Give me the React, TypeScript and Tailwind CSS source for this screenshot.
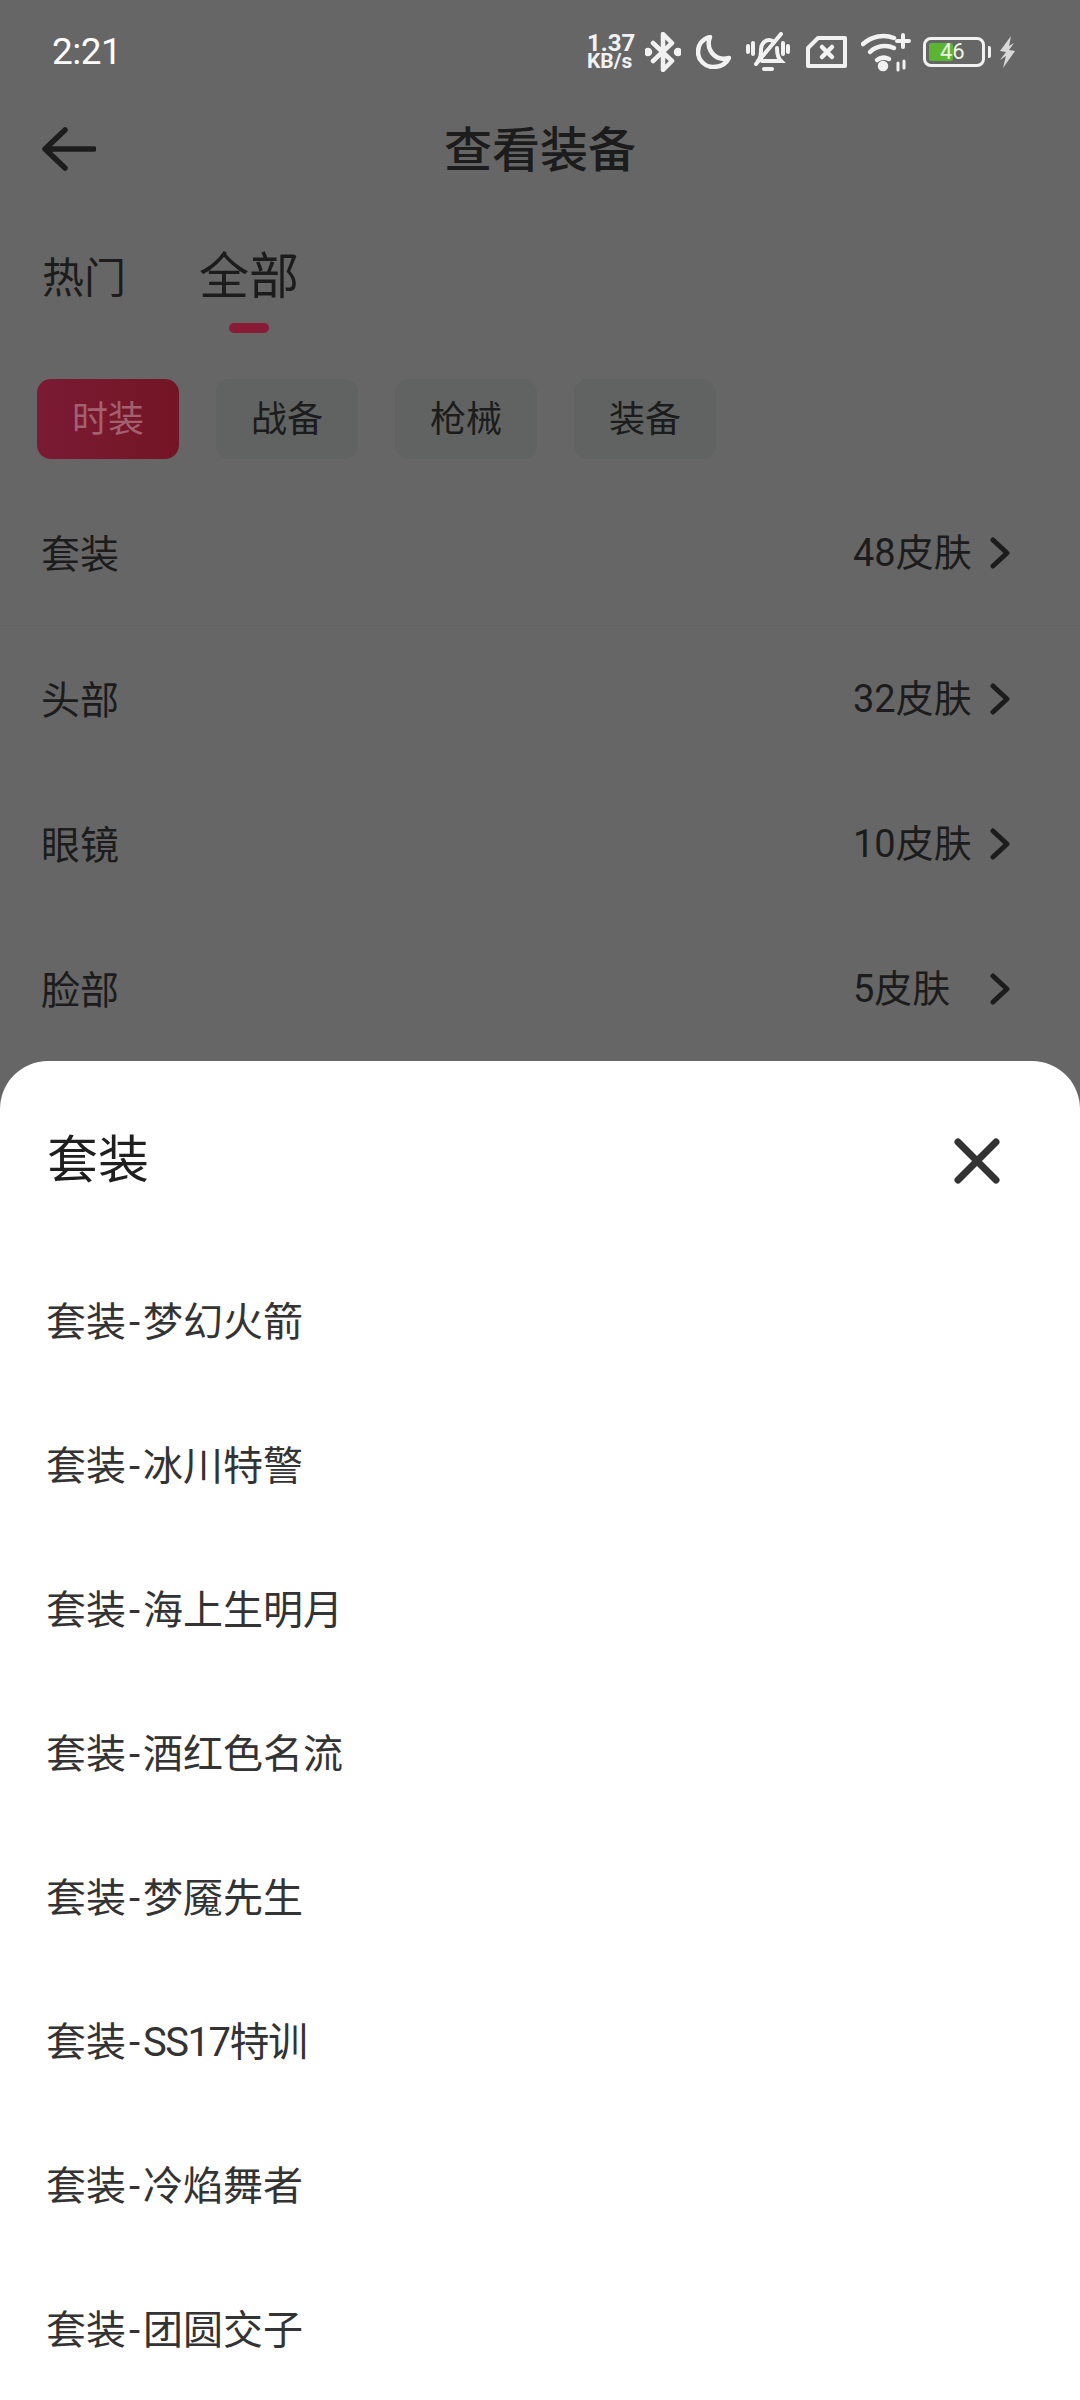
const chips = ["时装", "战备", "枪械", "装备"];

const rows = [
  { name: "套装", count: "48皮肤", line: true },
  { name: "头部", count: "32皮肤" },
  { name: "眼镜", count: "10皮肤" },
  { name: "脸部", count: "5皮肤" },
];

const suits = ["梦幻火箭", "冰川特警", "海上生明月", "酒红色名流", "梦魇先生", "SS17特训", "冷焰舞者", "团圆交子"];

function StatusIcons() {
  return (
    <div className="flex items-center text-[#f2f2f2]">
      <div className="flex w-[48px] flex-col font-['Roboto'] font-bold">
        <span className="text-[24px] leading-[19px]">1.37</span>
        <span className="text-[21px] leading-[17px]">KB/s</span>
      </div>
      {/* bluetooth */}
      <svg className="ml-[10px]" width="36" height="40" viewBox="0 0 36 40" fill="none" stroke="currentColor" strokeWidth="4.5" strokeLinejoin="round" strokeLinecap="round">
        <path d="M8 11 27 29 18 38V2l9 9L8 29" />
        <circle cx="3" cy="20" r="2" fill="currentColor" />
        <circle cx="33" cy="20" r="2" fill="currentColor" />
      </svg>
      {/* moon */}
      <svg className="ml-[15px]" width="35" height="34" viewBox="0 0 35 34" fill="none" stroke="currentColor" strokeWidth="4.5" strokeLinejoin="round">
        <path d="M14 2C6 4 2 10 2 17c0 8 7 15 15 15 7 0 13-3 16-9-3 1-6 1-8 .5C16 22 10 12 14 2Z" />
      </svg>
      {/* muted bell */}
      <svg className="ml-[15px]" width="44" height="40" viewBox="0 0 44 40" fill="none" stroke="currentColor" strokeWidth="4" strokeLinecap="round">
        <path d="M12 29c3-3 3-7 3-12 0-5 4-9 8-9 2 0 4 1 5 2" />
        <path d="M31 16c0 5 1 10 4 13H16" />
        <path d="M35 2 10 32" />
        <path d="M18 37h8" />
        <path d="M2 14v6M7 11v11M37 11v11M42 14v6" />
      </svg>
      {/* sim with cross */}
      <svg className="ml-[16px]" width="41" height="32" viewBox="0 0 41 32" fill="none" stroke="currentColor" strokeWidth="4" strokeLinejoin="round" strokeLinecap="round">
        <path d="M12 2h27v28H2V12Z" />
        <path d="m16 11 10 10M26 11 16 21" strokeWidth="4.5" />
      </svg>
      {/* wifi */}
      <svg className="ml-[14px]" width="50" height="40" viewBox="0 0 50 40" fill="none" stroke="currentColor" strokeWidth="4.5" strokeLinecap="round">
        <path d="M2 12c9-8 21-10 31-6" />
        <path d="M9 20c6-6 16-8 24-4" />
        <path d="M16 28c4-3 8-3 12-1" />
        <circle cx="22" cy="34" r="3" fill="currentColor" />
        <path d="M42 3v12M36 9h12" strokeWidth="4" />
        <path d="M37 31v7M43 29v7" strokeWidth="3" />
      </svg>
      {/* battery */}
      <div className="ml-[12px] flex items-center">
        <div className="relative flex h-[30px] w-[62px] items-center rounded-[8px] border-[3px] border-[#f2f2f2] p-[3px]">
          <div className="h-full w-[24px] rounded-[2px] bg-[#5cb531]" />
          <span className="absolute left-[14px] font-['Roboto'] text-[22px] leading-none text-[#eef5e8]">46</span>
        </div>
        <div className="ml-[3px] h-[12px] w-[3px] rounded-r-[2px] bg-[#f2f2f2]" />
      </div>
      <svg className="ml-[8px]" width="17" height="32" viewBox="0 0 17 32" fill="#d9d9d9">
        <path d="M12 0 1 15l6 1-6 8 6-4-3 12 12-17-6-1 5-7-5 3Z" />
      </svg>
    </div>
  );
}

export default function App() {
  return (
    <div className="flex h-[2400px] w-[1080px] flex-col overflow-hidden bg-[#666666] font-['Noto_Sans_CJK_SC',sans-serif] text-[#1c1c1c]">
      <div className="flex h-[104px] items-center justify-between pr-[64px] pl-[52px]">
        <span className="font-['Roboto'] text-[37px] tracking-[-0.5px] text-white">2:21</span>
        <StatusIcons />
      </div>

      <header className="grid h-[90px] grid-cols-[1fr_auto_1fr] items-center px-[42px]">
        <svg width="54" height="44" viewBox="0 0 54 44" fill="none" stroke="#1c1c1c" strokeWidth="5.5" strokeLinecap="round" strokeLinejoin="round">
          <path d="M23 3 3 22l20 19M4 22h48" />
        </svg>
        <h1 className="mb-[6px] text-[48px] leading-none font-medium">查看装备</h1>
      </header>

      <div className="flex h-[185px] items-start gap-[73px] pt-[50px] pl-[42px]">
        <span className="pt-[6px] text-[42px] leading-[50px]">热门</span>
        <div className="flex flex-col items-center">
          <span className="text-[50px] leading-[56px]">全部</span>
          <div className="mt-[23px] h-[10px] w-[40px] rounded-full bg-[#8a1b37]" />
        </div>
      </div>

      <div className="flex gap-[37px] pl-[37px]">
        {chips.map((chip, i) => (
          <div
            key={chip}
            className={
              i === 0
                ? "flex h-[80px] w-[142px] items-center justify-center rounded-[14px] bg-gradient-to-r from-[#7a1a34] to-[#741524] pb-[6px] text-[36px] text-[#a3606f]"
                : "flex h-[80px] w-[142px] items-center justify-center rounded-[14px] bg-[#606362] pb-[6px] text-[36px]"
            }
          >
            {chip}
          </div>
        ))}
      </div>

      <div className="mt-[22px] flex flex-col">
        {rows.map((row) => (
          <div
            key={row.name}
            className={
              row.line
                ? "flex h-[145px] items-center border-b border-[#636363] pr-[70px] pl-[41px]"
                : "flex h-[145px] items-center pr-[70px] pl-[41px]"
            }
          >
            <span className="flex-1 pb-[3px] text-[39px]">{row.name}</span>
            <span className="w-[137px] pt-[1px] font-['Roboto','Noto_Sans_CJK_SC',sans-serif] text-[38px]">{row.count}</span>
            <svg width="20" height="32" viewBox="0 0 20 32" fill="none" stroke="#1c1c1c" strokeWidth="5" strokeLinecap="round" strokeLinejoin="round">
              <path d="m3 3 14 13L3 29" />
            </svg>
          </div>
        ))}
      </div>

      <div className="flex-1 rounded-t-[48px] bg-white">
        <div className="flex h-[187px] items-start justify-between pt-[66px] pr-[80px] pl-[47px]">
          <h2 className="text-[51px] leading-[58px] text-[#1f1f1f]">套装</h2>
          <svg className="mt-[11px]" width="46" height="46" viewBox="0 0 46 46" fill="none" stroke="#333333" strokeWidth="7" strokeLinecap="round">
            <path d="m4 4 38 38M42 4 4 42" />
          </svg>
        </div>
        {suits.map((suit) => (
          <div key={suit} className="flex h-[144px] items-center pt-[6px] pl-[46px] font-['Roboto','Noto_Sans_CJK_SC',sans-serif] text-[40px] text-[#333333]">
            套装<span className="mx-[3px]">-</span>
            <span className={suit.startsWith("SS") ? "tracking-[-1.5px]" : ""}>{suit}</span>
          </div>
        ))}
      </div>
    </div>
  );
}
